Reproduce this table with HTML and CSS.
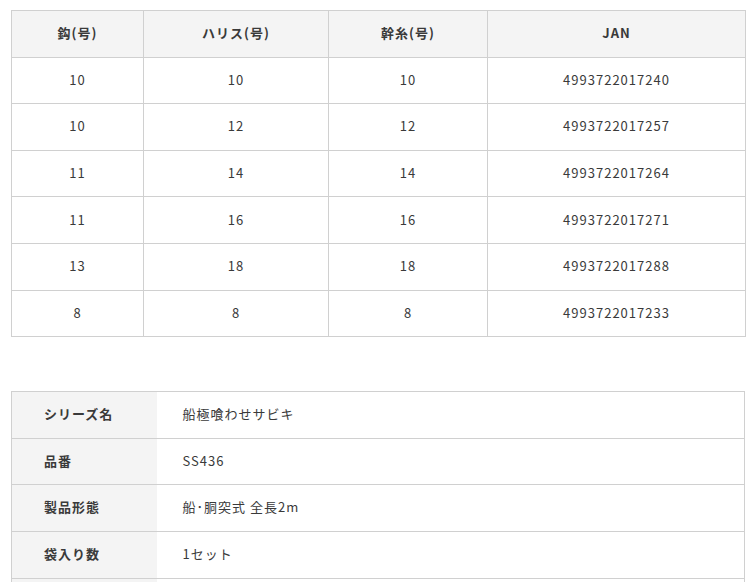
FILE: index.html
```html
<!DOCTYPE html>
<html lang="ja">
<head>
<meta charset="utf-8">
<link rel="stylesheet" href="styles.css">
</head>
<body>
<div class="page">
  <table class="spec">
    <colgroup>
      <col class="c1"><col class="c2"><col class="c3"><col class="c4">
    </colgroup>
    <thead>
      <tr><th>鈎(号)</th><th>ハリス(号)</th><th>幹糸(号)</th><th>JAN</th></tr>
    </thead>
    <tbody>
      <tr><td>10</td><td>10</td><td>10</td><td>4993722017240</td></tr>
      <tr><td>10</td><td>12</td><td>12</td><td>4993722017257</td></tr>
      <tr><td>11</td><td>14</td><td>14</td><td>4993722017264</td></tr>
      <tr><td>11</td><td>16</td><td>16</td><td>4993722017271</td></tr>
      <tr><td>13</td><td>18</td><td>18</td><td>4993722017288</td></tr>
      <tr><td>8</td><td>8</td><td>8</td><td>4993722017233</td></tr>
    </tbody>
  </table>

  <table class="info">
    <colgroup><col class="l"><col class="v"></colgroup>
    <tbody>
      <tr><th>シリーズ名</th><td>船極喰わせサビキ</td></tr>
      <tr><th>品番</th><td>SS436</td></tr>
      <tr><th>製品形態</th><td>船･胴突式 全長2m</td></tr>
      <tr><th>袋入り数</th><td>1セット</td></tr>
      <tr><th>&nbsp;</th><td>&nbsp;</td></tr>
    </tbody>
  </table>
</div>
</body>
</html>
```
FILE: styles.css
```css
html, body {
  margin: 0;
  padding: 0;
  background: #fff;
}
body {
  font-family: "Noto Sans CJK JP", "Noto Sans", sans-serif;
  font-size: 13px;
  color: #3a3a3a;
  letter-spacing: 1px;
}
.page {
  padding: 10px 10px 0 11px;
  width: 734px;
}
table {
  border-collapse: collapse;
  width: 734px;
  table-layout: fixed;
}
th, td {
  border: 1px solid #d0d0d0;
  height: 44.6px;
  padding: 0 0 1px 0;
  line-height: 20px;
}
.spec th, .spec td {
  text-align: center;
}
.spec th {
  background: #f4f4f4;
  font-weight: bold;
}
.spec td {
  font-weight: normal;
}
.c1 { width: 132px; }
.c2 { width: 185px; }
.c3 { width: 159px; }
.c4 { width: 258px; }

.info {
  margin-top: 54px;
}
.info .l { width: 145px; }
.info th, .info td {
  height: 43.6px;
  padding-bottom: 2px;
}
.info th {
  background: #f4f4f4;
  text-align: left;
  font-weight: bold;
  padding-left: 32px;
  border-right: none;
}
.info td {
  text-align: left;
  padding-left: 26px;
  border-left: none;
}
```
